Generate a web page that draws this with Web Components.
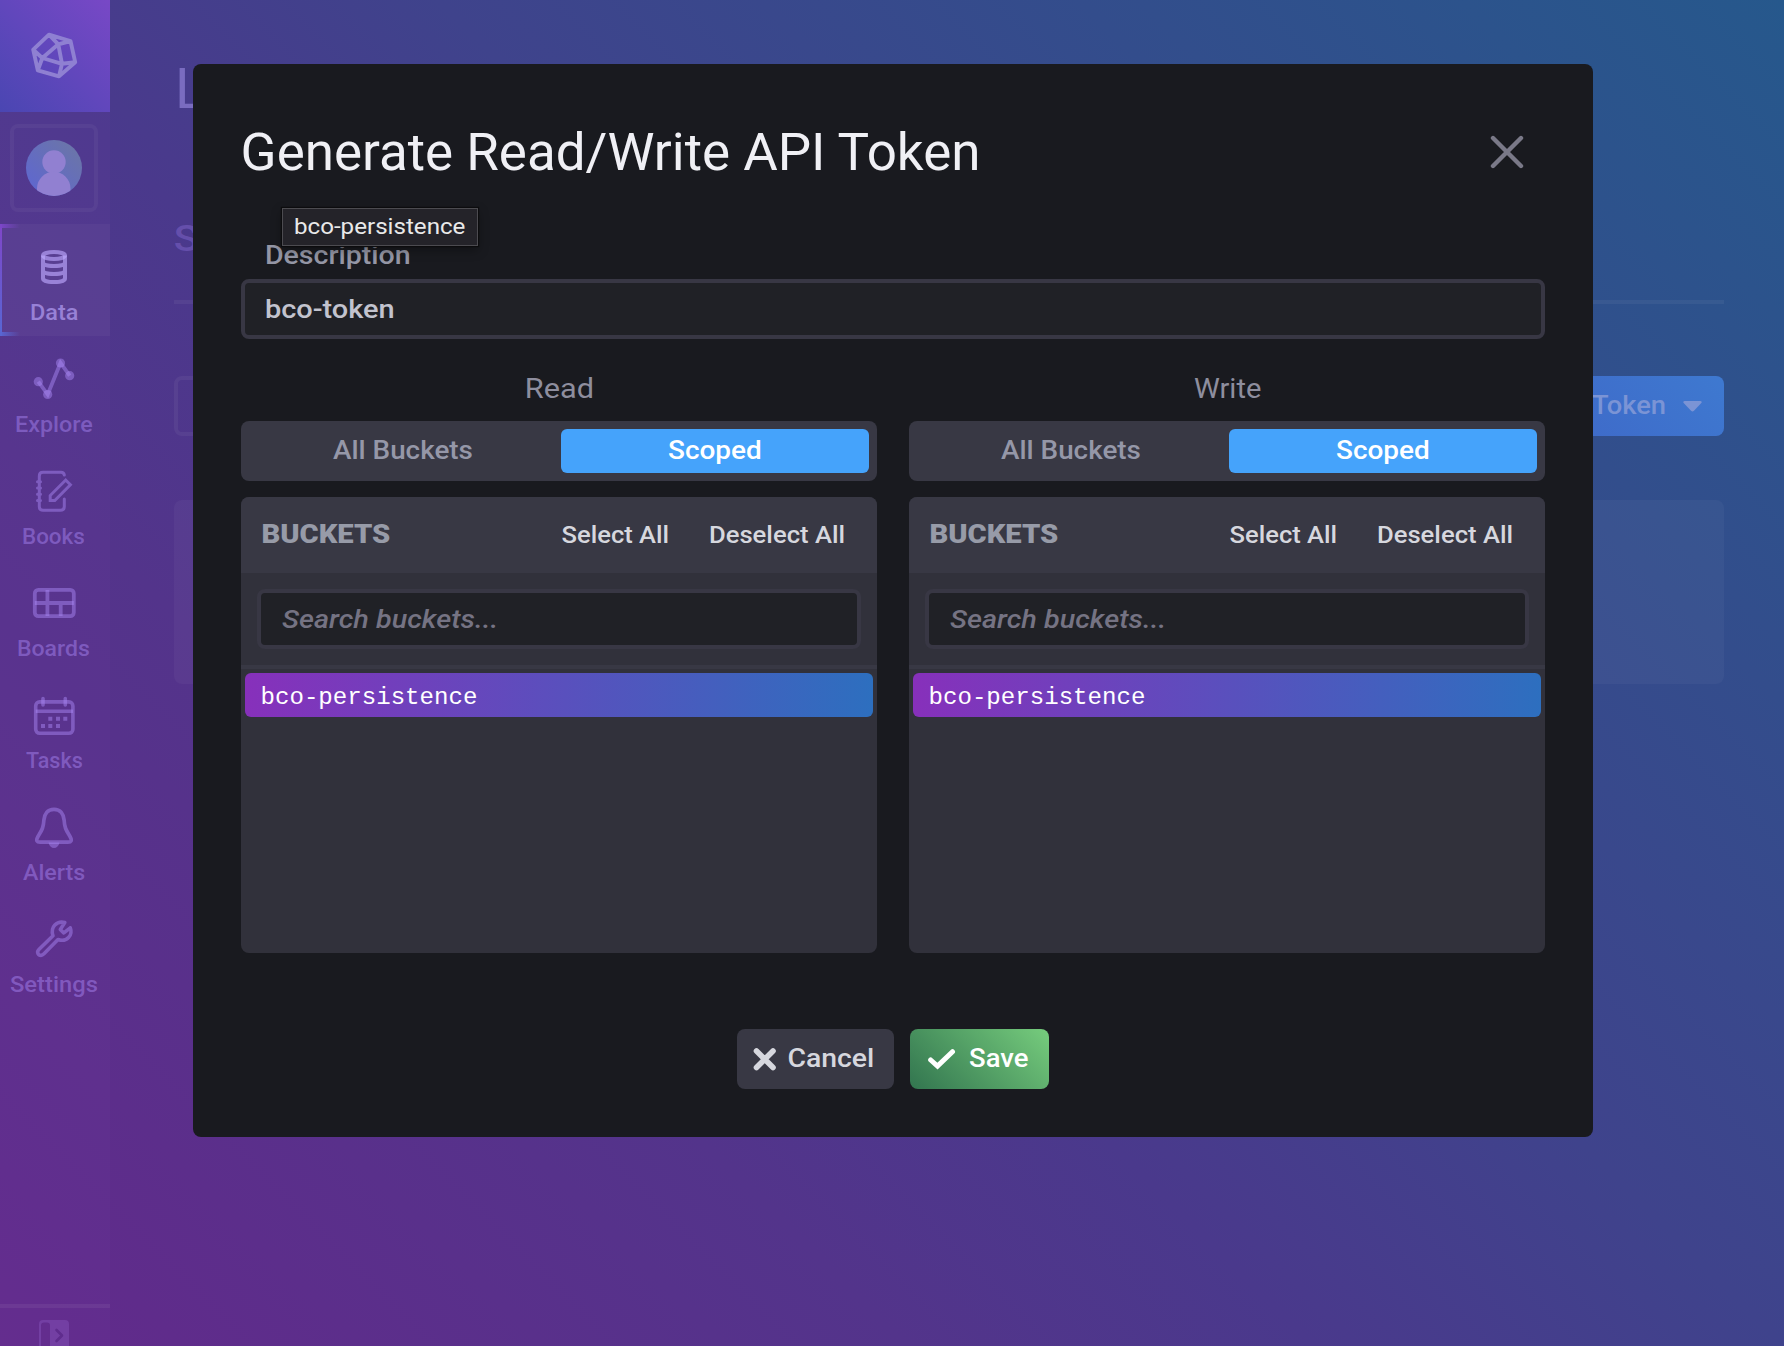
<!DOCTYPE html>
<html lang="en">
<head>
<meta charset="utf-8">
<title>Generate Read/Write API Token</title>
<style>
html,body{margin:0;height:100%;overflow:hidden}
body{font-family:Roboto,"Liberation Sans",sans-serif;background:#4b3a8c}
</style>
</head>
<body>
<app-shell></app-shell>
<script>
const define = (name, html, setup) => {
  const t = document.createElement('template');
  t.innerHTML = html;
  customElements.define(name, class extends HTMLElement {
    connectedCallback() {
      if (this.shadowRoot) return;
      const root = this.attachShadow({ mode: 'open' });
      root.append(t.content.cloneNode(true));
      if (setup) setup(this, root);
    }
  });
};

/* A label whose ink is exactly `w` pixels wide and whose box is as tall as its capitals.
   `dx` and `dy` nudge the ink optically without changing the box. */
const ctx = document.createElement('canvas').getContext('2d');
define('fit-text', `<style>
:host{display:block;flex:none;line-height:.711;white-space:nowrap}
span{display:inline-block;transform-origin:0 0;line-height:inherit;vertical-align:top}
</style><span></span>`, (host, root) => {
  const a = n => host.getAttribute(n);
  const size = +a('size'), w = +a('w'), weight = a('weight') || 500;
  const family = a('mono') !== null ? '"Liberation Mono",monospace' : 'Roboto,"Liberation Sans",sans-serif';
  const span = root.querySelector('span');
  span.textContent = a('text');
  ctx.font = `${a('italic') !== null ? 'italic ' : ''}${weight} ${size}px ${family}`;
  const m = ctx.measureText(a('text'));
  const k = w / (m.actualBoundingBoxLeft + m.actualBoundingBoxRight);
  host.style.cssText += `;width:${w}px;height:${Math.round(size * .711)}px`;
  host.style.color = a('color') || '';
  span.style.cssText = `font:${ctx.font};line-height:${Math.round(size * .711)}px;transform:translate(${m.actualBoundingBoxLeft * k + +a('dx')}px,${+a('dy')}px) scaleX(${k})`;
});

const icons = {
  data: [224, `<g stroke-width="4"><ellipse cx="54" cy="255.5" rx="11" ry="3.5"/><path d="M43 255.500V278.500C43 280.600 48 282 54 282S65 280.600 65 278.500V255.500M43 262.500C43 264.800 48 266 54 266S65 264.800 65 262.500M43 270.500C43 272.800 48 274 54 274S65 272.800 65 270.500"/></g>`],
  explore: [336, `<path stroke-width="3.800" d="M38.300 381.700 47.700 394.500 60.500 363 69.700 375.700"/><g fill="currentColor" stroke="none"><circle cx="38.300" cy="381.700" r="4.600"/><circle cx="47.700" cy="394.500" r="4.600"/><circle cx="60.500" cy="363" r="4.600"/><circle cx="69.700" cy="375.700" r="4.600"/></g>`],
  books: [448, `<g stroke-width="3"><path stroke-linecap="round" d="M64.300 475C64 473 63 472.200 61 472.200H43Q39.300 472.200 39.300 476V506.500Q39.300 510.300 43 510.300H60.500Q64.300 510.300 64.300 506.500V499M37.500 481.700H40.500M37.500 488H40.500M37.500 494.300H40.500M37.500 500.600H40.500"/><path d="M50.200 500.500V495.500L65.700 480 70.400 484.700 54.800 500.500Z"/></g>`],
  boards: [560, `<g stroke-width="3.800"><rect x="34.800" y="589.900" width="39" height="26.200" rx="3.500"/><path d="M34.800 603H73.800M47.400 590V616M60.700 603V616"/></g>`],
  tasks: [672, `<g stroke-width="3.600"><rect x="35.700" y="701.900" width="37.200" height="31.400" rx="4"/><path d="M35.700 711.200H73"/><path stroke-linecap="round" d="M43 698.500V705M65.300 698.500V705"/></g><path fill="currentColor" stroke="none" d="M48.300 716.700h4v4h-4zM56 716.700h4v4h-4zM63.300 716.700h4v4h-4zM41 724h4v4h-4zM48.300 724h4v4h-4zM56 724h4v4h-4z"/>`],
  alerts: [784, `<path stroke-width="3.700" d="M54 809.300C47.500 809.300 44.400 814 43.900 820C43.400 828.500 41.500 830.500 38 836.500C35.500 841 37 842.200 40 842.200H68C71 842.200 72.500 841 70 836.500C66.500 830.500 64.600 828.500 64.100 820C63.600 814 60.500 809.300 54 809.300Z"/><path fill="currentColor" stroke="none" d="M48.500 842.500h11c-.7 3.600-2.900 5.500-5.500 5.500s-4.800-1.900-5.500-5.500z"/>`],
  settings: [896, `<path stroke-width="3.600" stroke-linejoin="round" d="M64.800 922.600C57 920.500 50 927 53 935.800L38.900 949.500C36.300 952.100 38.200 955.400 41 955.400C42.200 955.400 43 954.800 44 953.800L58 939.500C67 942.600 73 935 70.300 927.800L63.800 932.900 60.300 929.400Z"/>`]
};

define('nav-item', `<style>
:host{display:flex;flex-direction:column;align-items:center;height:112px;width:110px;position:relative;color:rgb(170 135 245/.48)}
:host([active]){color:rgb(190 170 255/.63);background:rgb(255 255 255/.035)}
:host([active])::before{content:"";position:absolute;inset:0;background:linear-gradient(90deg,#7b46c8,#7b46c800) 0 0/20px 4px no-repeat,linear-gradient(90deg,#5965d2,#5965d200) 0 100%/20px 4px no-repeat,linear-gradient(#8046c8,#5767d4) 0 0/2px 100% no-repeat}
svg{width:110px;height:80px;display:block;fill:none;stroke:currentColor}
fit-text{margin:1px 2px 0 0}
</style>`, (host, root) => {
  const [y, body] = icons[host.getAttribute('icon')];
  root.innerHTML += `<svg viewBox="0 ${y} 110 80">${body}</svg><fit-text size="22" w="${host.getAttribute('w')}" text="${host.getAttribute('label')}"></fit-text>`;
});

define('side-nav', `<style>
:host{display:flex;flex-direction:column;width:110px;height:100%;background:rgb(115 65 165/.14);overflow:hidden}
.logo{height:112px;background:linear-gradient(45deg,#4a46b2,#7848c6);color:#8f80d2}
.user{height:112px;display:flex;align-items:center;padding-left:10px}
.frame{box-sizing:border-box;width:88px;height:88px;border:4px solid rgb(255 255 255/.045);border-radius:8px;display:flex;align-items:center;justify-content:center}
.foot{margin-top:auto;height:38px;border-top:4px solid rgb(255 255 255/.06)}
svg{display:block}
</style>
<div class="logo"><svg width="110" height="112" fill="none" stroke="currentColor" stroke-width="3.900" stroke-linejoin="round"><path d="M49 34.700 70.500 41 75.200 62.200 59 76.400 37.800 70.300 33.200 49.700ZM58.300 44.300 42.300 58 62 63.800ZM49 34.700 58.300 44.300 70.500 41M33.200 49.700 42.300 58 37.800 70.300M75.200 62.200 62 63.800 59 76.400"/></svg></div>
<div class="user"><div class="frame"><svg width="56" height="56"><defs><linearGradient id="a" x1="0" y1="1" x2="1" y2="0"><stop offset=".1" stop-color="#5f67cf"/><stop offset=".9" stop-color="#6b75a8"/></linearGradient><clipPath id="c"><circle cx="28" cy="28" r="28"/></clipPath></defs><g clip-path="url(#c)"><rect width="56" height="56" fill="url(#a)"/><g fill="#9180d1"><circle cx="28" cy="22" r="11.700"/><path d="M11 56V48.500A16.700 16.700 0 0 1 44.500 48.500V56Z"/></g></g></svg></div></div>
<nav-item active icon="data" label="Data" w="46.500"></nav-item>
<nav-item icon="explore" label="Explore" w="77"></nav-item>
<nav-item icon="books" label="Books" w="61.500"></nav-item>
<nav-item icon="boards" label="Boards" w="71.500"></nav-item>
<nav-item icon="tasks" label="Tasks" w="56.500"></nav-item>
<nav-item icon="alerts" label="Alerts" w="62"></nav-item>
<nav-item icon="settings" label="Settings" w="87.500"></nav-item>
<div class="foot"><svg width="110" height="38" viewBox="0 1308 110 38"><path fill="#733fa3" fill-rule="evenodd" d="M43 1320H65Q69 1320 69 1324V1350H39V1324Q39 1320 43 1320ZM44 1322.500Q41 1322.500 41 1325.500V1350H50V1325.500Q50 1322.500 47 1322.500Z"/><path fill="none" stroke="#5f2c8d" stroke-width="2.600" stroke-linecap="round" stroke-linejoin="round" d="M56.500 1330 62 1335.500 56.500 1341"/></svg></div>`);

define('token-page', `<style>
:host{display:flex;flex-direction:column;box-sizing:border-box;padding:68px 60px 0 64px}
.h{padding-left:5px;color:#7a6cc0}
.t{padding-left:1px;margin-top:117px;color:#654fab}
hr{margin:49px 0 0;border:0;height:4px;background:rgb(255 255 255/.05)}
.row{display:flex;justify-content:space-between;margin-top:72px;height:60px}
.search{box-sizing:border-box;width:500px;border:4px solid rgb(255 255 255/.05);border-radius:8px}
.btn{box-sizing:border-box;width:300px;border-radius:8px;background:linear-gradient(45deg,#3f60c4,#3e79d0);display:flex;justify-content:flex-end;align-items:center;gap:18px;padding-right:22px;color:#7b94d5}
.card{margin-top:64px;height:184px;border-radius:8px;background:rgb(255 255 255/.035)}
</style>
<fit-text class="h" size="56" weight="400" w="25" dy="1" text="L"></fit-text>
<fit-text class="t" size="36" w="23" dy="1" text="S"></fit-text>
<hr>
<div class="row"><div class="search"></div><div class="btn"><fit-text size="26" w="72.500" dx="-1" dy="-1" text="Token"></fit-text><svg width="19" height="11"><path fill="currentColor" d="M1.500 0H17.500Q19.500 .5 18.300 2L11 9.800Q9.500 11 8 9.800L.700 2Q-.5 .5 1.500 0Z"/></svg></div></div>
<div class="card"></div>`);

define('form-field', `<style>
:host{display:flex;align-items:center;box-sizing:border-box;height:60px;border:4px solid #383744;border-radius:8px;background:#202126;padding:0 0 0 21px}
</style><slot></slot>`);

define('bucket-panel', `<style>
:host{display:flex;flex-direction:column;width:636px}
.name{align-self:center;color:#8e8e9e}
.toggle{display:flex;box-sizing:border-box;height:60px;margin-top:23px;padding:8px;border-radius:8px;background:#383844;color:#9597a8}
.opt{flex:1 1 0;display:flex;align-items:center;justify-content:center;border-radius:6px}
.opt:first-child{padding-right:4px}
.on{flex:0 0 308px;background:#45a3fb;color:#fff}
.list{margin-top:16px;height:456px;border-radius:8px;background:#31313b;overflow:hidden}
.head{height:76px;background:#383844;display:flex;align-items:center;padding:0 33px 0 21px;box-sizing:border-box;color:#d6d7de}
.head :first-child{margin-right:auto;color:#979ba8}
.head :nth-child(2){margin-right:42px}
.head fit-text+fit-text{padding-top:1px}
.find{padding:16px;border-bottom:4px solid #383844}
.item{margin:4px;height:44px;border-radius:6px;background:linear-gradient(90deg,#8730bb,#2d6fbf);color:#fff;display:flex;align-items:center;padding-left:17px;box-sizing:border-box}
.item fit-text{padding-top:2px}
</style>
<div class="name"></div>
<div class="toggle"><div class="opt"><fit-text size="26" w="139.500" dy="-1" text="All Buckets"></fit-text></div><div class="opt on"><fit-text size="26" w="93" dx="-1" dy="-1" text="Scoped"></fit-text></div></div>
<div class="list">
<div class="head"><fit-text size="26" weight="900" w="127.500" dx=".5" dy="-1" text="BUCKETS"></fit-text><fit-text size="23.500" w="106.500" dx="-.5" text="Select All"></fit-text><fit-text size="23.500" w="134" text="Deselect All"></fit-text></div>
<div class="find"><form-field><fit-text size="26" italic w="214" color="#757383" text="Search buckets..."></fit-text></form-field></div>
<div class="item"><fit-text mono size="24" weight="400" w="213.500" dx=".5" dy=".5" text="bco-persistence"></fit-text></div>
</div>`, (host, root) => {
  root.querySelector('.name').innerHTML = `<fit-text size="28" weight="400" dy="1" w="${host.getAttribute('w')}" text="${host.getAttribute('name')}"></fit-text>`;
});

define('action-button', `<style>
:host{display:flex;align-items:center;box-sizing:border-box;height:60px;border-radius:8px;background:#383844;color:#d6d7de}
:host([kind=save]){background:linear-gradient(45deg,#32754f,#76cc7d);color:#fff}
</style><slot></slot>`);

define('token-dialog', `<style>
:host{display:block;box-sizing:border-box;width:1400px;height:1073px;border-radius:8px;background:#191a1f;padding:70px 48px 0;position:relative}
.top{display:flex;justify-content:space-between;align-items:center;padding:0 21px 0 2px;color:#f0f0f5}
.label{margin:76px 0 15px 25px;color:#9496a5}
.cols{display:flex;justify-content:space-between;margin-top:39px}
.foot{display:flex;justify-content:center;gap:16px;margin-top:76px}
.tip{position:absolute;left:89px;top:144px;width:196px;height:38px;box-sizing:border-box;border:1px solid #4c4b50;background:#242329;box-shadow:0 0 1px 1px #0c0c0e,0 4px 10px rgb(0 0 0/.35);display:flex;align-items:center;padding-left:12px;color:#e9e9e9}
svg{display:block;fill:none;stroke:currentColor;stroke-linecap:round}
</style>
<div class="top"><fit-text size="51" weight="400" w="734.500" dx=".7" dy="1" text="Generate Read/Write API Token"></fit-text><svg width="34" height="34" stroke-width="4.400" style="color:#7a7988"><path d="M3 3 31 31M31 3 3 31"/></svg></div>
<div class="label"><fit-text size="26" w="143" text="Description"></fit-text></div>
<form-field><fit-text size="26" w="127" color="#c2c3ce" text="bco-token"></fit-text></form-field>
<div class="cols"><bucket-panel name="Read" w="65"></bucket-panel><bucket-panel name="Write" w="66.500"></bucket-panel></div>
<div class="foot">
<action-button style="width:157px;padding-left:16px;gap:12px"><svg width="24" height="24" stroke-width="5.600"><path d="M3.500 4 20 20.500M20 4 3.500 20.500"/></svg><fit-text size="26" w="84" dx="-.5" dy="-1" text="Cancel"></fit-text></action-button>
<action-button kind="save" style="width:139px;padding-left:17px;gap:13px"><svg width="29" height="24" stroke-width="5"><path stroke-linejoin="miter" d="M3.700 13 10.500 19 25.500 4.700"/></svg><fit-text size="26" w="59.500" dy="-1" text="Save"></fit-text></action-button>
</div>
<div class="tip"><fit-text size="22.500" weight="400" w="170.500" dy="-1" text="bco-persistence"></fit-text></div>`);

define('app-shell', `<style>
:host{display:grid;grid-template-columns:110px 1fr;width:1784px;height:1346px;position:relative;background:linear-gradient(45deg,#622a8b 0%,#53348b 29%,#4a398c 42%,#3f438c 57%,#26588c 100%)}
.overlay{position:absolute;inset:0;display:flex;justify-content:center;align-items:flex-start;padding:64px 0 0 2px}
side-nav{height:1346px}
</style>
<side-nav></side-nav><token-page></token-page><div class="overlay"><token-dialog></token-dialog></div>`);
</script>
</body>
</html>
